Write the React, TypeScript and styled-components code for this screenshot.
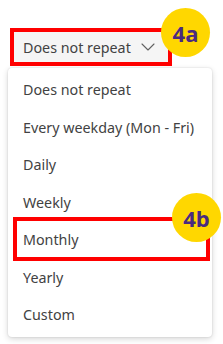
import React from 'react';
import styled, { createGlobalStyle } from 'styled-components';

const GlobalStyle = createGlobalStyle`
  html, body {
    margin: 0;
    padding: 0;
    background: #ffffff;
  }
  body {
    font-family: 'Noto Sans', 'Open Sans', Arial, sans-serif;
    color: #424242;
  }
`;

const Page = styled.div`
  position: relative;
  width: 223px;
  height: 344px;
  overflow: hidden;
  padding: 28px 0 0 8px;
  box-sizing: border-box;
`;

const Trigger = styled.div`
  position: relative;
  width: 162px;
  height: 38px;
  margin-left: 2px;
  box-sizing: border-box;
  border: 4px solid #ff0000;
  background: #f5f5f5;
  display: flex;
  align-items: center;
  gap: 10px;
  padding-left: 9px;
  font-size: 14.3px;
  color: #424242;
`;

const Chevron = styled.svg`
  width: 14px;
  height: 8px;
  flex: none;
`;

const Badge = styled.div<{ $top: number; $left: number }>`
  position: absolute;
  top: ${(p) => p.$top}px;
  left: ${(p) => p.$left}px;
  width: 49px;
  height: 49px;
  border-radius: 50%;
  background: #ffd700;
  color: #4a2a80;
  font-family: 'Open Sans', 'Noto Sans', Arial, sans-serif;
  font-weight: 700;
  font-size: 22px;
  display: flex;
  align-items: center;
  justify-content: center;
  z-index: 3;
`;

const Menu = styled.ul`
  list-style: none;
  margin: 2px 0 0 0;
  padding: 3px 0;
  width: 204px;
  box-sizing: border-box;
  background: #ffffff;
  border-radius: 4px;
  box-shadow: 0 0 2px rgba(0, 0, 0, 0.14), 0 2px 6px rgba(0, 0, 0, 0.16);
`;

const Item = styled.li<{ $marked?: boolean }>`
  position: relative;
  height: 37.5px;
  display: flex;
  align-items: center;
  padding-left: 15px;
  font-size: 14.3px;
  color: #424242;
  white-space: nowrap;

  &::after {
    content: '';
    display: ${(p) => (p.$marked ? 'block' : 'none')};
    position: absolute;
    left: 5px;
    right: 2px;
    top: -4px;
    bottom: -2px;
    border: 4px solid #ff0000;
  }
`;

const options = [
  'Does not repeat',
  'Every weekday (Mon - Fri)',
  'Daily',
  'Weekly',
  'Monthly',
  'Yearly',
  'Custom',
];

const App: React.FC = () => (
  <>
    <GlobalStyle />
    <Page>
      <Trigger>
        <span>Does not repeat</span>
        <Chevron viewBox="0 0 14 8" fill="none">
          <path d="M1 1l6 6 6-6" stroke="#616161" strokeWidth="1.1" strokeLinecap="round" strokeLinejoin="round" />
        </Chevron>
      </Trigger>
      <Badge $top={8} $left={161}>4a</Badge>
      <Menu>
        {options.map((o) => (
          <Item key={o} $marked={o === 'Monthly'}>
            {o}
          </Item>
        ))}
      </Menu>
      <Badge $top={193} $left={172}>4b</Badge>
    </Page>
  </>
);

export default App;
